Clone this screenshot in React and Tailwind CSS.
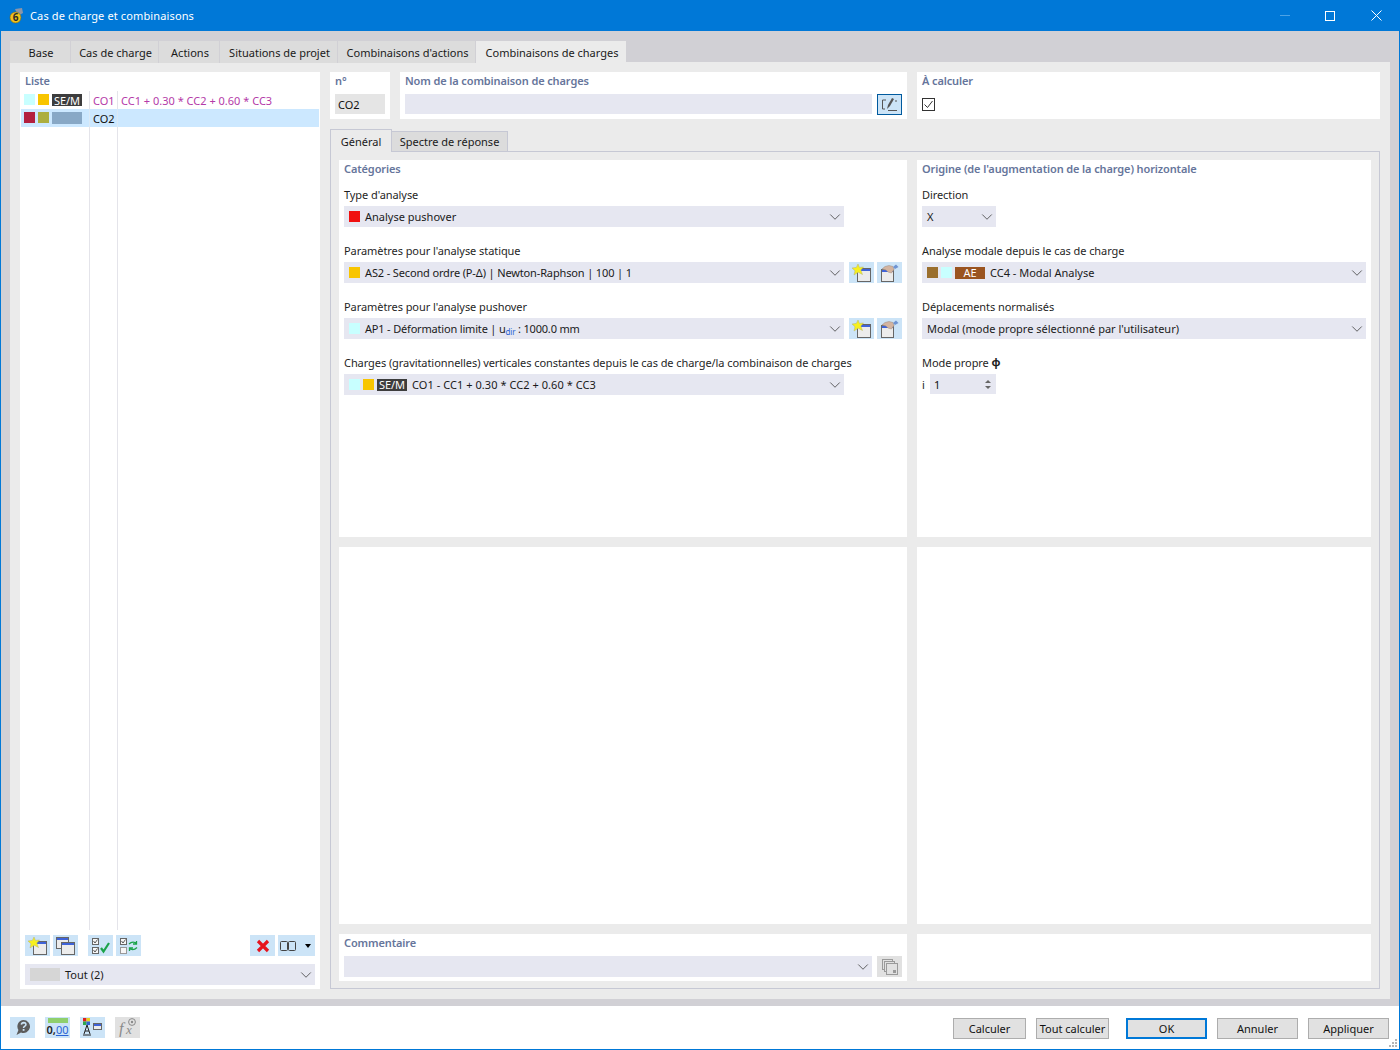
import { ChevronDown } from "lucide-react";

const font = { fontFamily: "'Noto Sans', sans-serif" };

const Swatch = ({ color }) => <span className={`w-[11px] h-[11px] shrink-0 ${color}`} />;

const Badge = ({ children, color = "bg-[#3d3d3d]", width = "w-[30px]" }) => (
    <span className={`${width} h-[12px] shrink-0 flex items-center justify-center text-white text-[11px] leading-none ${color}`}>
        {children}
    </span>
);

// text inside a 21px control sits a pixel under the box centre in the picture
const T = ({ children, className = "" }) => <span className={`pt-[2px] ${className}`}>{children}</span>;

// little window drawing, used on most toolbar buttons
const Win = ({ x = 0, y = 0, w = 12, h = 12 }) => (
    <g>
        <rect x={x + 0.5} y={y + 0.5} width={w} height={h} fill="#ececec" stroke="#666" />
        <rect x={x + 1} y={y + 1} width={w - 1} height="2" fill="#3f63d8" />
    </g>
);

const Star = () => (
    <polygon points="6,0 7.4,3.4 11.5,3 8.8,6 10.5,10.5 6.2,8.2 2,11 3,6.8 0,4 4.4,3.4" fill="#f7f01e" stroke="#b7b46a" strokeWidth="0.5" />
);

const NewWinIcon = () => (
    <svg width="19" height="18" viewBox="0 0 19 18">
        <Win x={5} y={4} w={13} h={13} />
        <Star />
    </svg>
);

const HandWinIcon = () => (
    <svg width="19" height="18" viewBox="0 0 19 18">
        <Win x={1} y={5} w={12} h={12} />
        <path d="M2 5 L5 2.5 L9 1.5 L13 2.5 L14 5.5 L11.5 9 L8 8 L6 6 Z" fill="#d3b4a0" stroke="#9b8a80" strokeWidth="0.5" />
        <path d="M13 3 L16 0.5 L18.5 3 L15 5 Z" fill="#6f94d2" />
    </svg>
);

const CopyWinIcon = () => (
    <svg width="19" height="18" viewBox="0 0 19 18">
        <Win x={0} y={0} w={12} h={11} />
        <Win x={5} y={5} w={13} h={12} />
    </svg>
);

const CheckBox = ({ x, y, checked = true }) => (
    <g>
        <rect x={x + 0.5} y={y + 0.5} width="6" height="6" fill="#f6f6f6" stroke={checked ? "#666" : "#999"} />
        {checked && <path d={`M${x + 1.5} ${y + 3} l1.5 2 l2.5 -3.5`} fill="none" stroke="#333" strokeWidth="0.8" />}
    </g>
);

const CheckAllIcon = () => (
    <svg width="20" height="18" viewBox="0 0 20 18">
        <CheckBox x={1} y={1} />
        <CheckBox x={1} y={10} />
        <path d="M10 11 L12.5 14.5 L18 6" fill="none" stroke="#1ba34a" strokeWidth="2.2" />
    </svg>
);

const CheckSwapIcon = () => (
    <svg width="20" height="18" viewBox="0 0 20 18">
        <CheckBox x={1} y={1} />
        <CheckBox x={1} y={10} checked={false} />
        <path d="M10 7 Q13.5 3.5 18 6.5 M17.5 4 V7 H14" fill="none" stroke="#1ba34a" strokeWidth="1.3" />
        <path d="M18 10.5 Q14.5 14 10 11.5 M10.5 14 V11 H14" fill="none" stroke="#1ba34a" strokeWidth="1.3" />
    </svg>
);

const RedCross = () => (
    <svg width="14" height="14" viewBox="0 0 14 14">
        <path d="M2 2 L12 12 M12 2 L2 12" stroke="#e6141e" strokeWidth="3.2" />
    </svg>
);

const ColumnsButton = () => (
    <button className="w-[37px] h-[21px] ml-[3px] bg-[#cce4f7] flex items-center pl-[2px]">
        <svg width="16" height="10" viewBox="0 0 16 10">
            <rect x="0.5" y="0.5" width="7" height="9" rx="1" fill="none" stroke="#444" />
            <rect x="8.5" y="0.5" width="7" height="9" rx="1" fill="none" stroke="#444" />
        </svg>
        <span className="ml-[9px] w-0 h-0 border-x-[3.5px] border-x-transparent border-t-[4px] border-t-black" />
    </button>
);

const PencilIcon = () => (
    <svg width="17" height="15" viewBox="0 0 17 15">
        <path d="M5 3 H1.5 V12 H4 M7 13.5 H16" fill="none" stroke="#555" />
        <path d="M6 12 L7 8 L11 1 L13 2 L9 9 Z" fill="#555" />
        <path d="M14 4 H16" stroke="#555" />
    </svg>
);

const HelpIcon = () => (
    <svg width="16" height="17" viewBox="0 0 16 17">
        <path d="M8.5 1 A6.5 6.5 0 1 1 6 13.5 L1.5 16 L3.4 11 A6.5 6.5 0 0 1 8.5 1 Z" fill="#5c5c5c" />
        <path d="M6.4 5.6 Q6.6 3.6 8.7 3.6 Q11 3.7 10.9 5.6 Q10.8 6.7 9.5 7.4 Q8.6 7.9 8.6 9" fill="none" stroke="#cce4f7" strokeWidth="1.6" />
        <rect x="7.7" y="10" width="1.8" height="1.8" fill="#cce4f7" />
    </svg>
);

const UnitsIcon = () => (
    <div className="flex flex-col items-center leading-none">
        <span className="w-[20px] h-[5px] bg-[#8fcf6d] mb-[1px]" />
        <span className="text-[11px] leading-[12px] font-semibold text-[#222]">
            0,<span className="font-normal text-[#2a63d4] underline">00</span>
        </span>
    </div>
);

const ColorTreeIcon = () => (
    <svg width="19" height="18" viewBox="0 0 19 18">
        <rect x="0" y="0" width="3.5" height="3.5" fill="#e02020" />
        <rect x="3.5" y="0" width="3.5" height="3.5" fill="#e8d020" />
        <rect x="0" y="3.5" width="3.5" height="3.5" fill="#2fa84f" />
        <rect x="3.5" y="3.5" width="3.5" height="3.5" fill="#3060d0" />
        <path d="M4 7 L1 16 M4 7 L7 16 M2 13 H6 M0 17 H8" stroke="#222" fill="none" />
        <Win x={10} y={5} w={8} h={6} />
    </svg>
);

const FormulaIcon = () => (
    <svg width="20" height="20" viewBox="0 0 20 20">
        <text x="1" y="17" fontSize="16" fontStyle="italic" fontFamily="'Liberation Serif', serif" fill="#8a8a8a">f</text>
        <text x="8" y="17" fontSize="13" fontStyle="italic" fontFamily="'Liberation Serif', serif" fill="#8a8a8a">x</text>
        <circle cx="14" cy="5" r="3.4" fill="none" stroke="#8a8a8a" />
        <circle cx="14" cy="5" r="1.2" fill="#8a8a8a" />
    </svg>
);

const SmallButton = ({ children, gray = false, className = "" }) => (
    <button className={`w-[25px] h-[21px] shrink-0 flex items-center justify-center ${gray ? "bg-[#e1e1e1]" : "bg-[#cce4f7]"} ${className}`}>
        {children}
    </button>
);

const Select = ({ children, className = "w-[500px]" }) => (
    <div className={`h-[21px] bg-[#e6e7f1] flex items-center pl-[5px] text-[11px] text-[#1a1a1a] whitespace-nowrap ${className}`}>
        <div className="flex-1 flex items-center gap-[3px] min-w-0">{children}</div>
        <ChevronDown size={18} strokeWidth={1.1} className="text-[#444] shrink-0" />
    </div>
);

const Title = ({ children }) => (
    <div className="h-[18px] flex items-center text-[11px] font-semibold tracking-[-0.12px] text-[#66759b] whitespace-nowrap">{children}</div>
);

const Field = ({ label, children }) => (
    <div className="mb-[15px]">
        <div className="h-[18px] mb-[2px] flex items-center text-[11px] tracking-[-0.07px] text-[#1f1f1f] whitespace-nowrap">{label}</div>
        <div className="flex items-center">{children}</div>
    </div>
);

const FieldButtons = () => (
    <>
        <SmallButton className="ml-[5px]"><NewWinIcon /></SmallButton>
        <SmallButton className="ml-[3px]"><HandWinIcon /></SmallButton>
    </>
);

const FooterButton = ({ children, primary = false, width = "w-[81px]", className = "" }) => (
    <button
        className={`h-[21px] ${width} flex items-center justify-center pt-[2px] bg-[#e1e1e1] text-[11px] text-[#111] ${primary ? "border-2 border-[#0078d7]" : "border border-[#adadad]"} ${className}`}
    >
        {children}
    </button>
);

const tabs = [
    { label: "Base", w: "w-[61px]" },
    { label: "Cas de charge", w: "w-[88px]" },
    { label: "Actions", w: "w-[61px]" },
    { label: "Situations de projet", w: "w-[118px]" },
    { label: "Combinaisons d'actions", w: "w-[138px]" },
];

const ListPanel = () => (
    <div className="w-[300px] shrink-0 bg-white flex flex-col">
        <div className="pl-[5px] pb-[1px]"><Title>Liste</Title></div>
        <div className="flex-1 flex flex-col px-[1px] text-[11px]">
            <div className="h-[18px] flex items-stretch text-[#b43aa8]">
                <div className="w-[69px] border-r border-[#e4e4ea] flex items-start pt-[3px] pl-[3px] gap-[3px]">
                    <Swatch color="bg-[#c8ffff]" />
                    <Swatch color="bg-[#f8c500]" />
                    <Badge>SE/M</Badge>
                </div>
                <div className="w-[28px] border-r border-[#e4e4ea] flex items-center pl-[3px] pt-[2px]">CO1</div>
                <div className="flex-1 flex items-center pl-[3px] pt-[2px]">CC1 + 0.30 * CC2 + 0.60 * CC3</div>
            </div>
            <div className="h-[18px] flex items-stretch bg-[#cce8ff] text-[#111]">
                <div className="w-[69px] border-r border-[#dbe9f5] flex items-start pt-[3px] pl-[3px] gap-[3px]">
                    <Swatch color="bg-[#b3203f]" />
                    <Swatch color="bg-[#acae3f]" />
                    <Badge color="bg-[#88a8c6]" />
                </div>
                <div className="w-[28px] border-r border-[#dbe9f5] flex items-center pl-[3px] pt-[2px]">CO2</div>
                <div className="flex-1" />
            </div>
            <div className="flex-1 flex items-stretch">
                <div className="w-[69px] border-r border-[#e4e4ea]" />
                <div className="w-[28px] border-r border-[#e4e4ea]" />
            </div>
        </div>
        <div className="h-[59px] px-[5px] pt-[5px] shrink-0">
            <div className="flex items-center">
                <SmallButton><NewWinIcon /></SmallButton>
                <SmallButton className="ml-[3px]"><CopyWinIcon /></SmallButton>
                <SmallButton className="ml-[10px]"><CheckAllIcon /></SmallButton>
                <SmallButton className="ml-[3px]"><CheckSwapIcon /></SmallButton>
                <SmallButton className="ml-auto"><RedCross /></SmallButton>
                <ColumnsButton />
            </div>
            <Select className="w-[290px] mt-[8px]">
                <span className="w-[30px] h-[13px] bg-[#d6d6d6] mr-[2px]" />
                <T>Tout (2)</T>
            </Select>
        </div>
    </div>
);

const TopPanels = () => (
    <div className="h-[47px] flex gap-[10px] shrink-0">
        <div className="w-[60px] bg-white px-[5px]">
            <Title>n°</Title>
            <div className="mt-[4px] h-[20px] bg-[#e5e5e5] flex items-center pl-[3px] pt-[2px] text-[11px] text-[#111]">CO2</div>
        </div>
        <div className="w-[507px] bg-white px-[5px]">
            <Title>Nom de la combinaison de charges</Title>
            <div className="mt-[4px] flex">
                <div className="w-[467px] h-[20px] bg-[#e6e7f1]" />
                <button className="w-[25px] h-[21px] ml-[5px] bg-[#cce4f7] border border-[#005a9e] flex items-center justify-center">
                    <PencilIcon />
                </button>
            </div>
        </div>
        <div className="flex-1 bg-white px-[5px]">
            <Title>À calculer</Title>
            <div className="mt-[8px] w-[13px] h-[13px] border border-[#333] bg-white flex items-center justify-center">
                <svg width="11" height="11" viewBox="0 0 11 11">
                    <path d="M1.5 5.5 L4.5 8.5 L9.5 2" fill="none" stroke="#333" />
                </svg>
            </div>
        </div>
    </div>
);

const CategoriesPanel = () => (
    <div className="bg-white pl-[5px] pr-[5px]">
        <div className="mb-[8px]"><Title>Catégories</Title></div>
        <Field label="Type d'analyse">
            <Select>
                <Swatch color="bg-[#f01010]" />
                <T className="ml-[2px]">Analyse pushover</T>
            </Select>
        </Field>
        <Field label="Paramètres pour l'analyse statique">
            <Select>
                <Swatch color="bg-[#f8c500]" />
                <T className="ml-[2px] tracking-[-0.14px]">AS2 - Second ordre (P-Δ) | Newton-Raphson | 100 | 1</T>
            </Select>
            <FieldButtons />
        </Field>
        <Field label="Paramètres pour l'analyse pushover">
            <Select>
                <Swatch color="bg-[#c8ffff]" />
                <T className="ml-[2px] tracking-[-0.18px]">
                    AP1 - Déformation limite | u<sub className="text-[8px] text-[#2a63d4] leading-none">dir</sub> : 1000.0 mm
                </T>
            </Select>
            <FieldButtons />
        </Field>
        <Field label="Charges (gravitationnelles) verticales constantes depuis le cas de charge/la combinaison de charges">
            <Select>
                <Swatch color="bg-[#c8ffff]" />
                <Swatch color="bg-[#f8c500]" />
                <Badge>SE/M</Badge>
                <T className="ml-[2px] tracking-[0.05px]">CO1 - CC1 + 0.30 * CC2 + 0.60 * CC3</T>
            </Select>
        </Field>
    </div>
);

const OriginPanel = () => (
    <div className="bg-white px-[5px]">
        <div className="mb-[8px]"><Title>Origine (de l'augmentation de la charge) horizontale</Title></div>
        <Field label="Direction">
            <Select className="w-[74px]"><T>X</T></Select>
        </Field>
        <Field label="Analyse modale depuis le cas de charge">
            <Select className="w-[444px]">
                <Swatch color="bg-[#9a6f2e]" />
                <Swatch color="bg-[#c8ffff]" />
                <Badge color="bg-[#9a5420]">AE</Badge>
                <T className="ml-[2px]">CC4 - Modal Analyse</T>
            </Select>
        </Field>
        <Field label="Déplacements normalisés">
            <Select className="w-[444px]"><T>Modal (mode propre sélectionné par l'utilisateur)</T></Select>
        </Field>
        <Field label={<>Mode propre&nbsp;<b className="inline-block -translate-y-[2px] text-[11px] leading-none">ϕ</b></>}>
            <span className="w-[8px] pt-[2px] text-[11px] text-[#1a1a1a]">i</span>
            <div className="w-[66px] h-[20px] bg-[#e6e7f1] flex items-center pl-[4px] pr-[5px] text-[11px] text-[#111]">
                <span className="flex-1 pt-[2px]">1</span>
                <span className="flex flex-col gap-[3px]">
                    <span className="block w-0 h-0 border-x-[3px] border-x-transparent border-b-[3px] border-b-[#666]" />
                    <span className="block w-0 h-0 border-x-[3px] border-x-transparent border-t-[3px] border-t-[#666]" />
                </span>
            </div>
        </Field>
    </div>
);

const DetailBox = () => (
    <div className="flex-1 border border-[#c6c8d4] grid grid-cols-[568px_454px] grid-rows-[377px_377px_47px] gap-[10px] pt-[8px] pl-[8px]">
        <CategoriesPanel />
        <OriginPanel />
        <div className="bg-white" />
        <div className="bg-white" />
        <div className="bg-white px-[5px]">
            <Title>Commentaire</Title>
            <div className="mt-[4px] flex items-center">
                <Select className="w-[528px]" />
                <SmallButton gray className="ml-[5px]">
                    <svg width="16" height="16" viewBox="0 0 16 16">
                        <rect x="0.5" y="0.5" width="10" height="10" fill="none" stroke="#9a9a9a" />
                        <rect x="2.5" y="2.5" width="10" height="10" fill="#e1e1e1" stroke="#9a9a9a" />
                        <rect x="4.5" y="4.5" width="11" height="11" fill="#e1e1e1" stroke="#9a9a9a" />
                        <rect x="11" y="11" width="3" height="3" fill="#9a9a9a" />
                    </svg>
                </SmallButton>
            </div>
        </div>
        <div className="bg-white" />
    </div>
);

export default function App() {
    return (
        <div style={font} className="w-[1400px] h-[1050px] flex flex-col overflow-hidden border-x border-b border-[#0078d7] bg-white">
            {/* title bar */}
            <div className="h-[31px] bg-[#0078d7] flex items-center text-white shrink-0 -mx-[1px] pl-[9px]">
                <svg width="14" height="16" viewBox="0 0 14 16" className="mr-[7px]">
                    <path d="M6 1 L13 0 L14 5 L9 8 Z" fill="#8b95a8" />
                    <circle cx="6.5" cy="9.5" r="5.5" fill="#f2c21a" stroke="#7d6510" strokeWidth="0.6" />
                    <text x="6.5" y="13" fontSize="10" fontWeight="700" textAnchor="middle" fill="#2b2b2b">6</text>
                </svg>
                <span className="text-[11px] tracking-[0.13px] pt-[2px]">Cas de charge et combinaisons</span>
                <div className="ml-auto flex items-center">
                    <span className="w-[10px] h-[1px] bg-[#4da3e6] mr-[35px]" />
                    <span className="w-[10px] h-[10px] border border-white mr-[36px]" />
                    <svg width="11" height="11" viewBox="0 0 11 11" className="mr-[18px]">
                        <path d="M0.5 0.5 L10.5 10.5 M10.5 0.5 L0.5 10.5" stroke="#fff" />
                    </svg>
                </div>
            </div>

            {/* dialog body */}
            <div className="h-[975px] bg-[#d1d0d5] flex flex-col px-[9px] pt-[10px] pb-[7px] shrink-0">
                <div className="h-[21px] flex items-stretch shrink-0 text-[11px] text-[#1a1a1a] relative z-10">
                    {tabs.map((t) => (
                        <div key={t.label} className={`${t.w} h-[22px] pt-[2px] pl-[2px] bg-[#dcdcdc] border-r border-[#d1d0d5] flex items-center justify-center whitespace-nowrap`}>
                            {t.label}
                        </div>
                    ))}
                    <div className="w-[150px] h-[22px] pt-[2px] pl-[2px] bg-[#ebebeb] flex items-center justify-center whitespace-nowrap">Combinaisons de charges</div>
                </div>
                <div className="flex-1 bg-[#ebebeb] flex gap-[10px] p-[10px] min-h-0">
                    <ListPanel />
                    <div className="flex-1 flex flex-col min-w-0">
                        <TopPanels />
                        <div className="h-[23px] mt-[10px] flex items-end shrink-0 text-[11px] text-[#1a1a1a] -mb-[1px] relative">
                            <div className="w-[62px] h-[23px] pt-[3px] bg-[#ebebeb] border border-b-0 border-[#c6c8d4] flex items-center justify-center">Général</div>
                            <div className="w-[116px] h-[21px] pt-[1px] bg-[#dcdcdc] border border-l-0 border-[#c6c8d4] flex items-center justify-center whitespace-nowrap">Spectre de réponse</div>
                        </div>
                        <DetailBox />
                    </div>
                </div>
            </div>

            {/* footer */}
            <div className="flex-1 relative flex items-center px-[9px]">
                <div className="flex items-center gap-[10px] -mt-[1px]">
                    <SmallButton><HelpIcon /></SmallButton>
                    <SmallButton><UnitsIcon /></SmallButton>
                    <SmallButton><ColorTreeIcon /></SmallButton>
                    <SmallButton gray><FormulaIcon /></SmallButton>
                </div>
                <div className="ml-auto flex items-center pr-[1px] mt-[1px]">
                    <FooterButton width="w-[73px]">Calculer</FooterButton>
                    <FooterButton width="w-[73px]" className="ml-[10px]">Tout calculer</FooterButton>
                    <FooterButton primary className="ml-[17px]">OK</FooterButton>
                    <FooterButton className="ml-[10px]">Annuler</FooterButton>
                    <FooterButton className="ml-[10px]">Appliquer</FooterButton>
                </div>
                <svg width="9" height="9" viewBox="0 0 9 9" className="absolute right-[1px] bottom-[1px]">
                    <path d="M6 0h2v2H6zM3 3h2v2H3zM6 3h2v2H6zM0 6h2v2H0zM3 6h2v2H3zM6 6h2v2H6z" fill="#b5b5b5" />
                </svg>
            </div>
        </div>
    );
}
